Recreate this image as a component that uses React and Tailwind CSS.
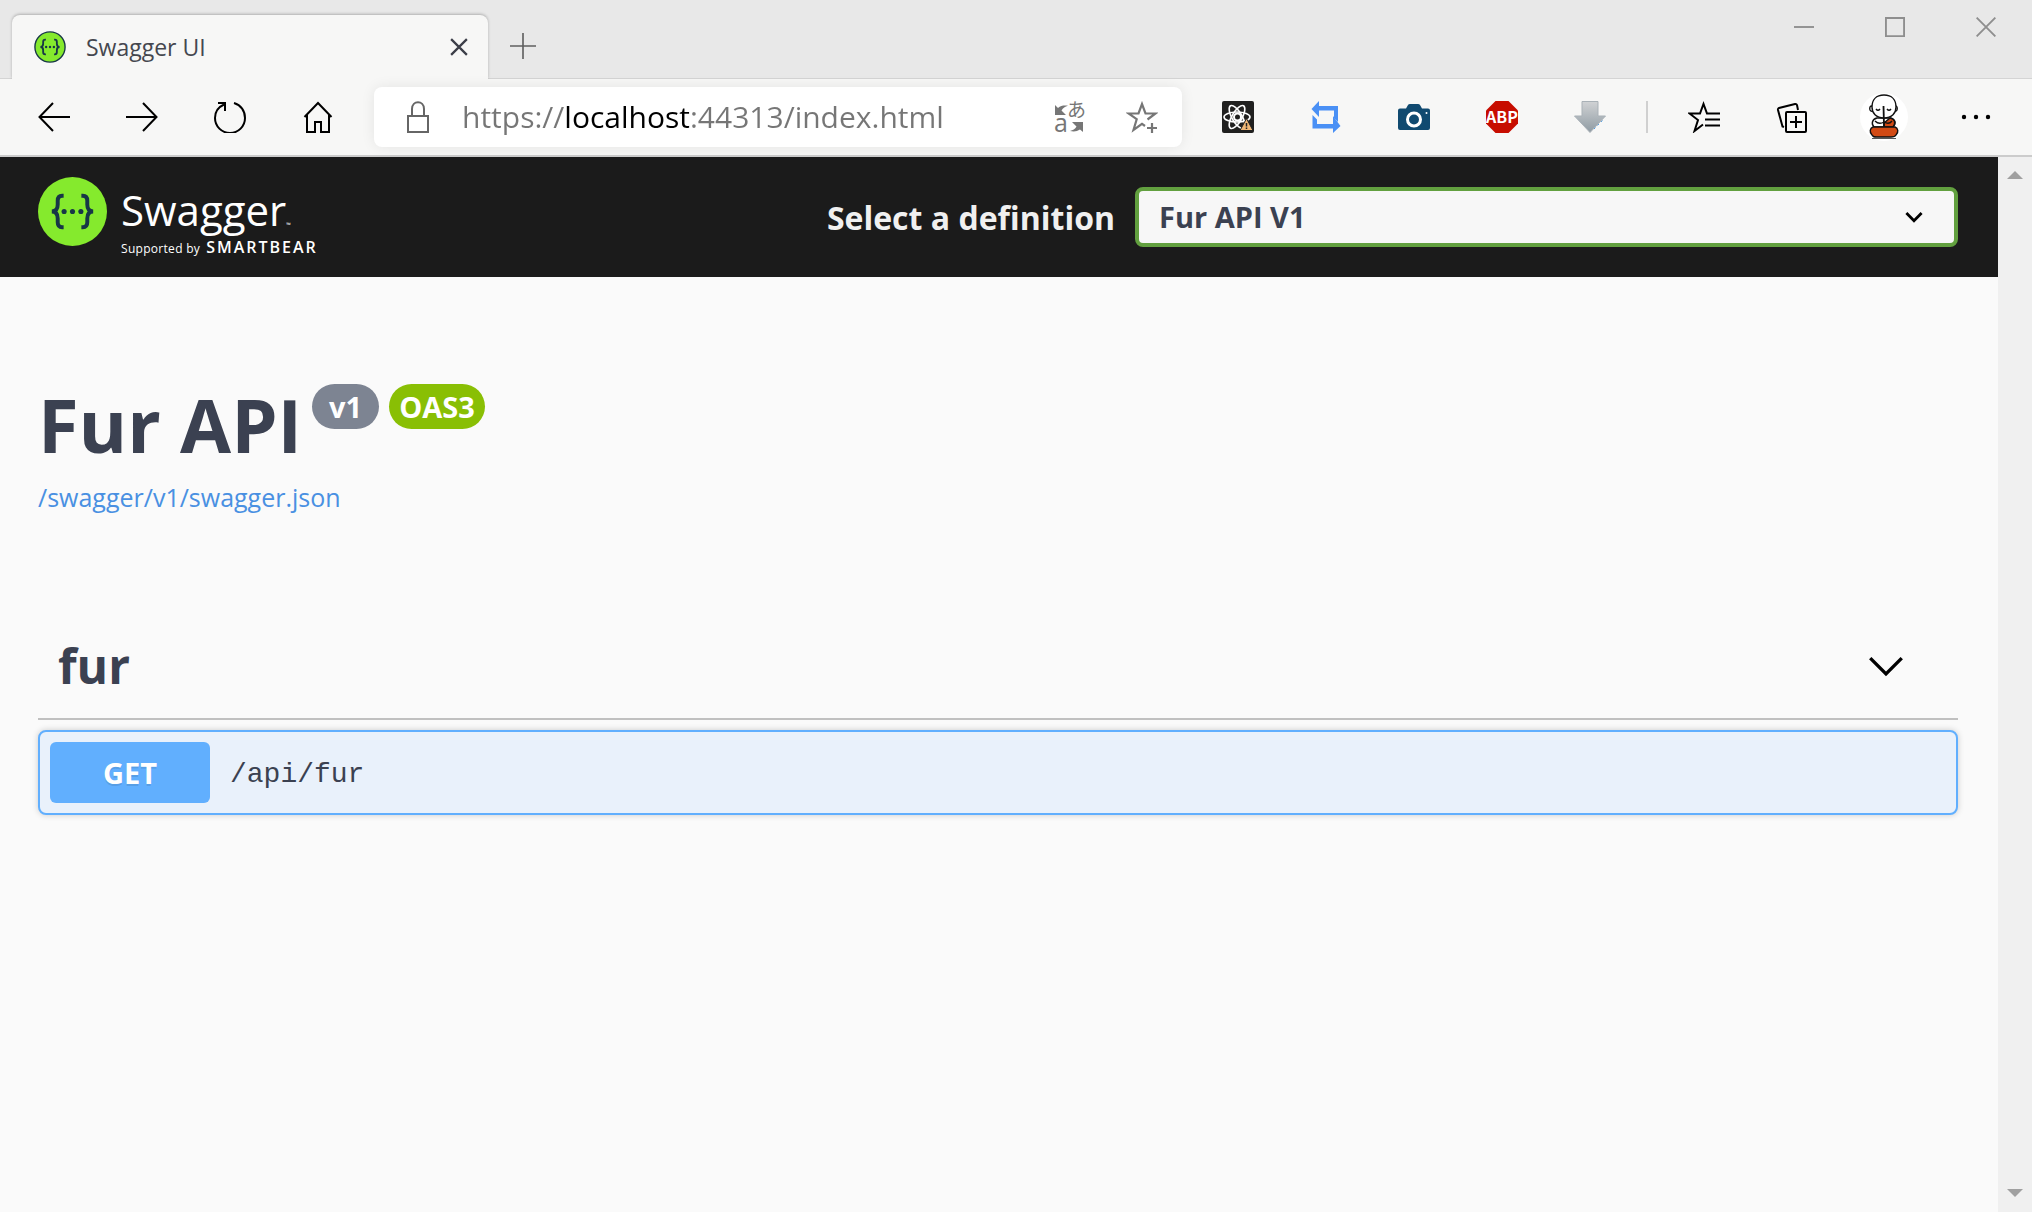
import { useState } from "react";

const DEFINITIONS = [{ value: "v1", label: "Fur API V1" }];

const OPERATIONS = [{ method: "GET", path: "/api/fur" }];

/* ---------- icons ---------- */

function SwaggerMark({ className, outlined }) {
  return (
    <svg viewBox="0 0 70 70" className={className} aria-hidden="true">
      <circle cx="35" cy="35" r={outlined ? 33 : 35} fill="#85ea2d" stroke="#173647" strokeWidth={outlined ? 3 : 0} />
      <g fill="none" stroke="#173647" strokeWidth="4">
        <path d="M26 19h-1.500c-3.500 0-4.500 1.800-4.500 5v4c0 4-1.500 7-6 7 4.500 0 6 3 6 7v4c0 3.200 1 5 4.500 5H26" />
        <path d="M44 19h1.500c3.500 0 4.500 1.800 4.500 5v4c0 4 1.500 7 6 7-4.500 0-6 3-6 7v4c0 3.200-1 5-4.500 5H44" />
      </g>
      <g fill="#173647">
        <circle cx="26.500" cy="35" r="2.600" />
        <circle cx="35" cy="35" r="2.600" />
        <circle cx="43.500" cy="35" r="2.600" />
      </g>
    </svg>
  );
}

function Stroke({ d, className = "size-8", width = 2 }) {
  return (
    <svg viewBox="0 0 32 32" className={className} fill="none" stroke="currentColor" strokeWidth={width} aria-hidden="true">
      <path d={d} />
    </svg>
  );
}

function TranslateIcon() {
  return (
    <svg viewBox="0 0 32 32" className="size-8 overflow-visible text-[#767676]" fill="currentColor" aria-hidden="true">
      <path d="M1 4l3 3c3-2.500 6-2.600 10-2.200-3 .8-5 2-6.500 4.700L12 14H1z" />
      <path d="M29 31l-3-2.500c-3 2-6 2.300-10 1.500 3-.8 5-2 6.500-4.500L18 21h11z" />
      <text x="0" y="31" fontSize="25" fontFamily="Open Sans, sans-serif">a</text>
      <text x="13" y="16" fontSize="19" fontFamily="Noto Sans CJK JP, sans-serif">あ</text>
    </svg>
  );
}

function StarPlusIcon() {
  return (
    <svg viewBox="0 0 32 32" className="size-8 text-[#767676]" fill="none" stroke="currentColor" strokeWidth="2.200" aria-hidden="true">
      <path d="M19 25l-3-2.200L7.500 29l3.200-10.800L2.500 12.500h10L16 3l3.500 9.500h10l-8 6" />
      <path d="M26 22v10M21 27h10" />
    </svg>
  );
}

function ReactDevIcon() {
  return (
    <svg viewBox="0 0 32 32" className="size-8" aria-hidden="true">
      <rect width="32" height="32" rx="2" fill="#20201f" />
      <g fill="none" stroke="#fff" strokeWidth="1.600">
        <ellipse cx="15" cy="16" rx="13" ry="5" />
        <ellipse cx="15" cy="16" rx="13" ry="5" transform="rotate(60 15 16)" />
        <ellipse cx="15" cy="16" rx="13" ry="5" transform="rotate(120 15 16)" />
        <circle cx="15.500" cy="16" r="3.500" fill="#20201f" strokeWidth="2" />
      </g>
      <path d="M24.500 17.500L31 29.500H18z" fill="#f0b776" stroke="#20201f" />
      <path d="M24.500 22v3.500M24.500 26.500v1.500" stroke="#20201f" strokeWidth="1.500" />
    </svg>
  );
}

function SwapIcon() {
  return (
    <svg viewBox="0 0 32 32" className="size-8 text-[#4a90f5]" fill="currentColor" aria-hidden="true">
      <path d="M1.500 8L9 0v5h19v16l-4-4V9.500H9V16z" />
      <path d="M30.500 25L23 32v-4.500H2.500V14l4.500 4.500V23H23v-8z" />
    </svg>
  );
}

function CameraIcon() {
  return (
    <svg viewBox="0 0 32 32" className="size-8" aria-hidden="true">
      <path d="M2 7.500h6L10 4q.5-1 2-1h8q1.500 0 2 1l2 3.500h6q2 0 2 2V27q0 2-2 2H2q-2 0-2-2V9.500q0-2 2-2z" fill="#104a70" />
      <circle cx="16" cy="18.500" r="6.500" fill="none" stroke="#fff" strokeWidth="3" />
      <circle cx="28.500" cy="12" r="1" fill="#fff" />
    </svg>
  );
}

function AbpIcon() {
  return (
    <svg viewBox="0 0 32 32" className="size-8" aria-hidden="true">
      <path d="M9.500 0h13L32 9.500v13L22.500 32h-13L0 22.500v-13z" fill="#c70d00" />
      <text x="16" y="22" textAnchor="middle" fontSize="16" fontWeight="700" fill="#fff" fontFamily="Noto Sans CJK SC, sans-serif">ABP</text>
    </svg>
  );
}

function DownloadIcon() {
  return (
    <svg viewBox="0 0 32 32" className="size-8" aria-hidden="true">
      <defs>
        <linearGradient id="dl" x1="0" y1="0" x2="0" y2="1">
          <stop offset="0" stopColor="#d0d2d4" />
          <stop offset="1" stopColor="#8f9ba3" />
        </linearGradient>
      </defs>
      <path d="M8 .5h16V15h7.500L16 31.500.5 15H8z" fill="url(#dl)" stroke="#a9b1b7" />
      <path d="M20 28l9-9" stroke="#4d9be0" strokeDasharray="2 3" />
    </svg>
  );
}

function FavoritesIcon() {
  return (
    <svg viewBox="0 0 32 32" className="size-8" fill="none" stroke="currentColor" strokeWidth="2" aria-hidden="true">
      <path d="M15 23.500L6.500 30l3.500-11L1.500 12.500H12L15.500 3 19 12.500h13" />
      <path d="M17 18.500h15M17 24.500h15" />
    </svg>
  );
}

function CollectionsIcon() {
  return (
    <svg viewBox="0 0 32 32" className="size-8" fill="none" stroke="currentColor" strokeWidth="2" aria-hidden="true">
      <path d="M8 26l-1.500-.5L2 9q-.3-1.500 1-2L19 3q1.500-.3 2 1l1 5" />
      <rect x="10" y="11" width="20" height="20" rx="1" />
      <path d="M20 15v12M14 21h12" />
    </svg>
  );
}

function Avatar() {
  return (
    <svg viewBox="0 0 48 48" className="size-12" aria-hidden="true">
      <circle cx="24" cy="24" r="24" fill="#fff" />
      <g stroke="#111" strokeWidth="1.400">
        <path d="M12 13q-3 0-2 4 1 2 3 1M35 13q3 0 2 4-1 2-3 1" fill="#fff" />
        <path d="M17 25c-5 1-6 6-3 9h19c4-4 2-8-3-9z" fill="#fff" />
        <path d="M24 30l6-5c5 1 6 5 3 9h-9z" fill="#d24a14" />
        <path d="M15 28q4 4 9 1 5 3 8-1" fill="none" />
        <path d="M24 2c8 0 12 5 12 12 0 6-4 11-12 11s-12-5-12-11C12 7 16 2 24 2z" fill="#fff" />
        <path d="M16 16q2 2.500 4 0M27 16q2 2.500 4 0" fill="none" />
        <path d="M23.500 13l.5 20" fill="none" strokeWidth="1.800" />
        <path d="M13 34h22c3 1 4 5 1 8-1 2-3 2-5 2H17c-3 0-4 0-5-2-3-3-2-7 1-8z" fill="#d24a14" />
      </g>
      <path d="M12 45.500h24" stroke="#555" />
    </svg>
  );
}

/* ---------- browser chrome ---------- */

const EXTENSIONS = [
  { key: "React Developer Tools", icon: ReactDevIcon },
  { key: "Swap", icon: SwapIcon },
  { key: "Screenshot", icon: CameraIcon },
  { key: "Adblock Plus", icon: AbpIcon },
  { key: "Downloads", icon: DownloadIcon },
];

const NAV = [
  { key: "Back", d: "M32 16H2M15 2L1.500 16 15 30" },
  { key: "Forward", d: "M0 16h30M17 2l13.500 14L17 30" },
  { key: "Refresh", d: "M20 2C27 4 31 10 31 17c0 8.300-6.700 15-15 15S1 25.300 1 17C1 11 4.500 6 10 3.500M4 2h7v8" },
  { key: "Home", d: "M2.500 16L16 2l13.500 14M5 14v17h8V21h6v10h8V14" },
];

function TabStrip() {
  return (
    <div className="flex items-stretch justify-between h-[79px] bg-[#e8e8e8] border-b border-[#d4d4d4]">
      <div className="flex items-end">
        <div className="flex items-center w-[476px] h-16 ml-3 -mb-px pl-[22px] pr-5 rounded-t-lg bg-[#f7f7f6] shadow-[0_-1px_3px_rgba(0,0,0,0.25)]">
          <SwaggerMark outlined className="size-8" />
          <span className="flex-1 ml-5 text-[23px] leading-8 text-[#45474f]">Swagger UI</span>
          <button aria-label="Close tab" className="text-[#3c3e48]">
            <Stroke className="size-[18px]" width={4} d="M2 2l28 28M30 2L2 30" />
          </button>
        </div>
        <button aria-label="New tab" className="ml-[22px] mb-[19px] text-[#5f5f5f]">
          <Stroke className="size-[26px]" width={2} d="M16 0v32M0 16h32" />
        </button>
      </div>
      <div className="flex items-start gap-[71px] pt-[17px] pr-9 text-[#8e8e8e]">
        <button aria-label="Minimize"><Stroke className="size-5" width={3} d="M0 16h32" /></button>
        <button aria-label="Maximize"><Stroke className="size-5" width={3} d="M1.500 1.500h29v29h-29z" /></button>
        <button aria-label="Close"><Stroke className="size-5" width={3} d="M1 1l30 30M31 1L1 31" /></button>
      </div>
    </div>
  );
}

function Toolbar() {
  const [url, setUrl] = useState("https://localhost:44313/index.html");

  return (
    <div className="flex items-center h-[78px] pl-[38px] pr-10 bg-[#f7f7f6] border-b-2 border-[#cccccc]">
      <div className="flex gap-14">
        {NAV.map((n) => (
          <button key={n.key} aria-label={n.key}>
            <Stroke d={n.d} />
          </button>
        ))}
      </div>

      <div className="flex-1 flex items-center h-[60px] ml-10 mr-10 pl-7 pr-6 rounded-lg bg-white shadow-[0_0_14px_rgba(0,0,0,0.08)]">
        <Stroke className="size-8 text-[#666]" d="M6 15h20v16H6zM10 15V8c0-9 12-9 12 0v7" />
        {/* the host part of the address is darker than the rest */}
        <input
          aria-label="Address"
          value={url}
          onChange={(e) => setUrl(e.target.value)}
          className="flex-1 min-w-0 ml-7 text-[30px] leading-10 outline-none text-transparent bg-clip-text bg-[linear-gradient(to_right,#767676_102px,#000_102px,#000_227px,#767676_227px)]"
        />
        <div className="flex gap-10">
          <button aria-label="Translate"><TranslateIcon /></button>
          <button aria-label="Add to favorites"><StarPlusIcon /></button>
        </div>
      </div>

      <div className="flex gap-14">
        {EXTENSIONS.map((x) => {
          const Icon = x.icon;
          return (
            <button key={x.key} aria-label={x.key}>
              <Icon />
            </button>
          );
        })}
      </div>

      <div className="w-0.5 h-8 mx-10 bg-[#d0d0d0]" />

      <div className="flex items-center">
        <button aria-label="Favorites"><FavoritesIcon /></button>
        <button aria-label="Collections" className="ml-14"><CollectionsIcon /></button>
        <button aria-label="Profile" className="ml-[52px]"><Avatar /></button>
        <button aria-label="Settings and more" className="ml-[52px]">
          <svg viewBox="0 0 32 32" className="size-8" aria-hidden="true">
            <circle cx="4" cy="16" r="2.200" />
            <circle cx="16" cy="16" r="2.200" />
            <circle cx="28" cy="16" r="2.200" />
          </svg>
        </button>
      </div>
    </div>
  );
}

function Scrollbar() {
  return (
    <div className="flex flex-col items-center justify-between w-[34px] shrink-0 pt-3.5 pb-[15px] bg-[#f0f0f0] text-[#a0a0a0]">
      <svg viewBox="0 0 16 8" className="w-4 h-2" fill="currentColor" aria-hidden="true"><path d="M0 8l8-8 8 8z" /></svg>
      <svg viewBox="0 0 16 8" className="w-4 h-2" fill="currentColor" aria-hidden="true"><path d="M0 0l8 8 8-8z" /></svg>
    </div>
  );
}

/* ---------- swagger page ---------- */

function Topbar() {
  const [definition, setDefinition] = useState("v1");

  return (
    <header className="flex items-center h-[120px] pl-[38px] pr-10 bg-[#1b1b1b] text-white">
      <a href="#" className="flex items-start gap-3.5 pb-3">
        <SwaggerMark className="size-[69px]" />
        <span className="flex flex-col h-[69px] pt-1">
          <span className="flex items-end text-[42px] leading-[58px]">
            Swagger<span className="text-[6px] leading-7">™</span>
          </span>
          <span className="flex items-baseline gap-1.5 text-[12px] leading-4 tracking-wide">
            Supported by <span className="text-base leading-4 font-semibold tracking-[2px]">SMARTBEAR</span>
          </span>
        </span>
      </a>
      <div className="flex items-center ml-auto">
        <label htmlFor="definition" className="mr-5 pt-0.5 text-[32px] leading-10 font-bold text-[#f0f0f0]">
          Select a definition
        </label>
        <div className="relative w-[823px]">
          <select
            id="definition"
            value={definition}
            onChange={(e) => setDefinition(e.target.value)}
            className="appearance-none block w-full h-[60px] pl-5 rounded-lg border-4 border-[#62a03f] bg-[#f7f7f7] text-[29px] font-bold text-[#3b4151]"
          >
            {DEFINITIONS.map((d) => (
              <option key={d.value} value={d.value}>{d.label}</option>
            ))}
          </select>
          <Stroke
            className="absolute right-[35px] top-[21px] size-[18px] text-black pointer-events-none"
            width={5}
            d="M2.500 9L16 22.500 29.500 9"
          />
        </div>
      </div>
    </header>
  );
}

function Operation({ method, path }) {
  return (
    <button className="flex items-center w-full p-2.5 rounded-lg border-2 border-[#61affe] bg-[#e9f1fb] shadow-[0_0_6px_rgba(0,0,0,0.19)] text-left">
      <span className="w-40 pt-[13px] pb-3 rounded-md bg-[#61affe] text-center text-[29px] leading-9 font-bold text-white [text-shadow:0_2px_0_rgba(0,0,0,0.1)]">
        {method}
      </span>
      <span className="ml-5 pt-1 font-['Liberation_Mono',monospace] text-[28px] leading-9 text-[#3b4151]">{path}</span>
    </button>
  );
}

export default function App() {
  const [open, setOpen] = useState(true);

  return (
    <div className="flex flex-col min-h-screen bg-[#fafafa] font-['Open_Sans','Noto_Sans',sans-serif] text-black">
      <TabStrip />
      <Toolbar />
      <div className="flex-1 flex">
        <div className="flex-1 min-w-0">
          <Topbar />
          <main className="pl-[38px] pr-10 text-[#3b4151]">
            <div className="pt-[100px]">
              <div className="flex items-start h-[100px]">
                <h1 className="text-[74px] leading-[96px] font-bold">Fur API</h1>
                <span className="mt-[7px] ml-2.5 px-[17px] rounded-full bg-[#7d8492] text-[29px] leading-[45px] font-bold text-white">v1</span>
                <span className="mt-[7px] ml-2.5 px-2.5 rounded-full bg-[#89bf04] text-[29px] leading-[45px] font-bold text-white">OAS3</span>
              </div>
              <a href="#" className="block text-[25px] leading-10 text-[#4990e2]">/swagger/v1/swagger.json</a>
            </div>

            <section className="mt-[100px]">
              <button
                onClick={() => setOpen(!open)}
                aria-expanded={open}
                className="flex items-center justify-between w-full h-[103px] pl-5 pr-[54px] pb-1 border-b-2 border-[#c0c0c0]"
              >
                <h2 className="text-[48px] leading-[60px] font-bold">fur</h2>
                <Stroke className="size-9 text-black" width={3} d="M2 9l14 14L30 9" />
              </button>
              <div className="pt-2.5">
                {open && OPERATIONS.map((o) => <Operation key={o.path} {...o} />)}
              </div>
            </section>
          </main>
        </div>
        <Scrollbar />
      </div>
    </div>
  );
}
